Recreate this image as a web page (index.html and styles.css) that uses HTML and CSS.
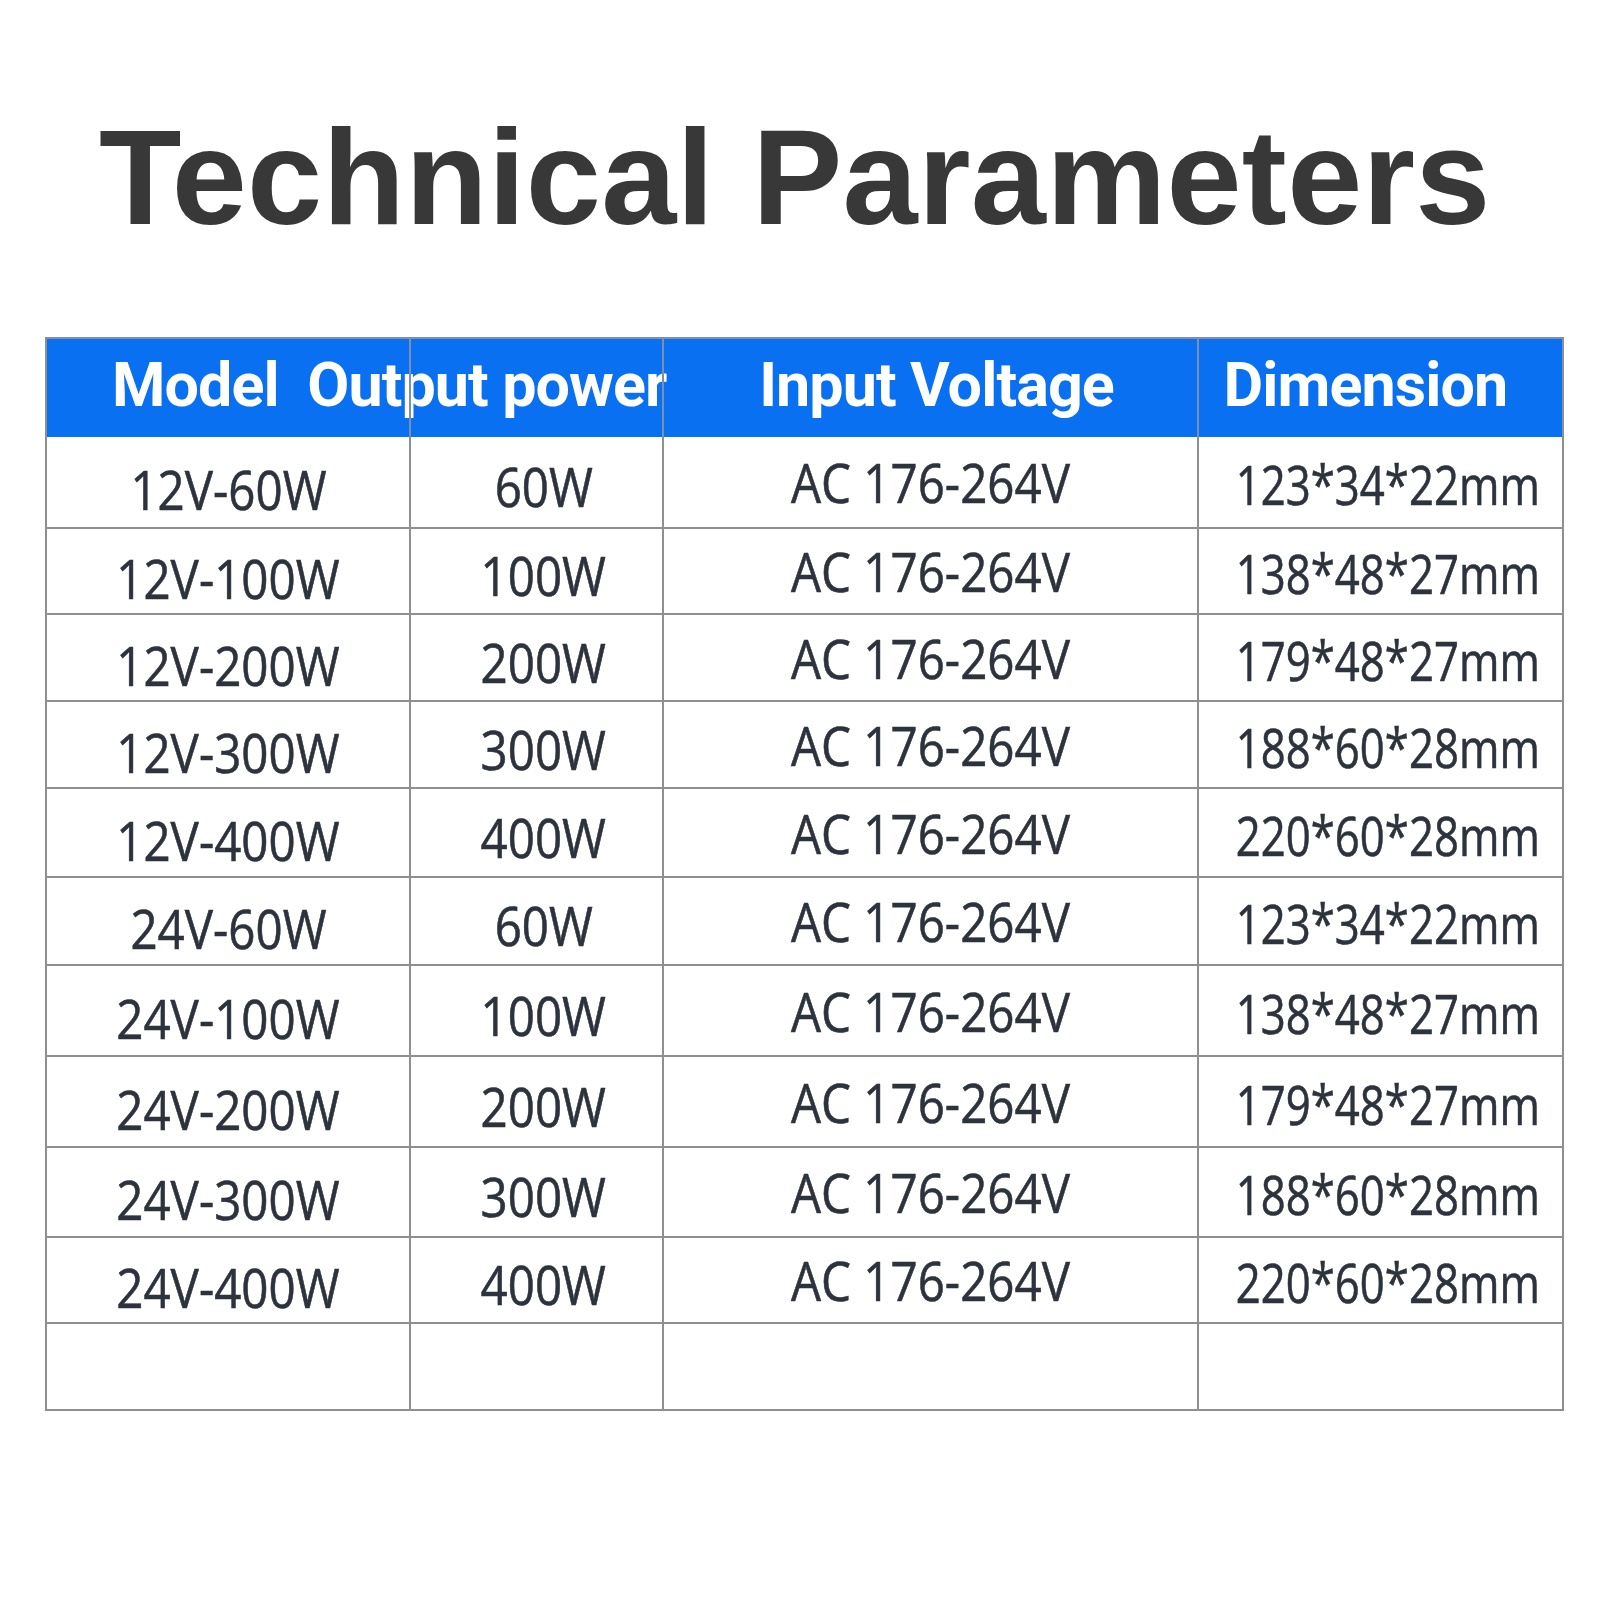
FILE: index.html
```html
<!DOCTYPE html>
<html lang="en">
<head>
<meta charset="utf-8">
<title>Technical Parameters</title>
<link rel="stylesheet" href="styles.css">
</head>
<body>
<main class="page">
  <h1 class="title">Technical Parameters</h1>
  <section class="spec">
    <div class="head">
      <div class="hcell c1"><span class="hl">Model&nbsp;&nbsp;Output power</span></div>
      <div class="hcell c2"></div>
      <div class="hcell c3"><span class="hl">Input Voltage</span></div>
      <div class="hcell c4"><span class="hl">Dimension</span></div>
    </div>
    <div class="rows">
      <div class="row"><div class="cell c1"><span class="t">12V-60W</span></div><div class="cell c2"><span class="t">60W</span></div><div class="cell c3"><span class="t">AC 176-264V</span></div><div class="cell c4"><span class="t">123*34*22mm</span></div></div>
      <div class="row"><div class="cell c1"><span class="t">12V-100W</span></div><div class="cell c2"><span class="t">100W</span></div><div class="cell c3"><span class="t">AC 176-264V</span></div><div class="cell c4"><span class="t">138*48*27mm</span></div></div>
      <div class="row"><div class="cell c1"><span class="t">12V-200W</span></div><div class="cell c2"><span class="t">200W</span></div><div class="cell c3"><span class="t">AC 176-264V</span></div><div class="cell c4"><span class="t">179*48*27mm</span></div></div>
      <div class="row"><div class="cell c1"><span class="t">12V-300W</span></div><div class="cell c2"><span class="t">300W</span></div><div class="cell c3"><span class="t">AC 176-264V</span></div><div class="cell c4"><span class="t">188*60*28mm</span></div></div>
      <div class="row"><div class="cell c1"><span class="t">12V-400W</span></div><div class="cell c2"><span class="t">400W</span></div><div class="cell c3"><span class="t">AC 176-264V</span></div><div class="cell c4"><span class="t">220*60*28mm</span></div></div>
      <div class="row"><div class="cell c1"><span class="t">24V-60W</span></div><div class="cell c2"><span class="t">60W</span></div><div class="cell c3"><span class="t">AC 176-264V</span></div><div class="cell c4"><span class="t">123*34*22mm</span></div></div>
      <div class="row"><div class="cell c1"><span class="t">24V-100W</span></div><div class="cell c2"><span class="t">100W</span></div><div class="cell c3"><span class="t">AC 176-264V</span></div><div class="cell c4"><span class="t">138*48*27mm</span></div></div>
      <div class="row"><div class="cell c1"><span class="t">24V-200W</span></div><div class="cell c2"><span class="t">200W</span></div><div class="cell c3"><span class="t">AC 176-264V</span></div><div class="cell c4"><span class="t">179*48*27mm</span></div></div>
      <div class="row"><div class="cell c1"><span class="t">24V-300W</span></div><div class="cell c2"><span class="t">300W</span></div><div class="cell c3"><span class="t">AC 176-264V</span></div><div class="cell c4"><span class="t">188*60*28mm</span></div></div>
      <div class="row"><div class="cell c1"><span class="t">24V-400W</span></div><div class="cell c2"><span class="t">400W</span></div><div class="cell c3"><span class="t">AC 176-264V</span></div><div class="cell c4"><span class="t">220*60*28mm</span></div></div>
      <div class="row"><div class="cell c1"></div><div class="cell c2"></div><div class="cell c3"></div><div class="cell c4"></div></div>
    </div>
  </section>
</main>
</body>
</html>
```

FILE: styles.css
```css
html, body {
  margin: 0;
  padding: 0;
  background: #ffffff;
}

.page {
  width: 1600px;
  height: 1600px;
  padding: 110px 0 0 45px;
  box-sizing: border-box;
}

.title {
  margin: 0 0 92px 54px;
  font-family: "Liberation Sans", Arial, sans-serif;
  font-weight: bold;
  font-size: 135px;
  line-height: 135px;
  color: #383838;
  letter-spacing: 0.3px;
  white-space: nowrap;
}

.spec {
  width: 1519px;
  box-sizing: border-box;
  border: 2px solid #8f8f8f;
  border-top-color: #7f8fa8;
}

.head {
  display: grid;
  grid-template-columns: 362px 253px 535px 365px;
  height: 98px;
  background: #0a70f2;
}

.hcell {
  display: flex;
  align-items: center;
  justify-content: center;
  padding-bottom: 6px;
  box-sizing: border-box;
  min-width: 0;
}

.hcell + .hcell {
  border-left: 2px solid #7d8fae;
}

.hl {
  font-family: Roboto, "Liberation Sans", Arial, sans-serif;
  font-weight: bold;
  font-size: 61px;
  color: #ffffff;
  letter-spacing: -0.9px;
  white-space: nowrap;
}

.head .c1 {
  justify-content: flex-start;
  padding-left: 65px;
}

.head .c3 {
  padding-left: 12px;
}

.head .c4 {
  padding-right: 30px;
}

.rows {
  display: grid;
  grid-template-rows: 92px 86px 87px 87px 89px 88px 91px 91px 90px 86px 85px;
}

.row {
  display: grid;
  grid-template-columns: 362px 253px 535px 365px;
  border-bottom: 2px solid #8f8f8f;
}

.row:last-child {
  border-bottom: 0;
}

.cell {
  display: flex;
  align-items: center;
  justify-content: center;
  box-sizing: border-box;
  min-width: 0;
}

.cell + .cell {
  border-left: 2px solid #8f8f8f;
}

.t {
  display: inline-block;
  flex: none;
  font-family: "Open Sans", "Noto Sans", sans-serif;
  font-size: 54px;
  line-height: 54px;
  color: #2d333c;
  -webkit-text-stroke: 0.6px #2d333c;
  white-space: nowrap;
  transform: scaleX(0.88);
  transform-origin: center;
}

.rows .c1 { padding-top: 14px; }
.rows .c2 { padding-top: 8px; padding-left: 14px; }
.rows .c3 { padding-top: 0; }
.rows .c4 { padding-top: 4px; padding-left: 14px; }

.rows .c4 .t {
  transform: scaleX(0.81);
}
```
